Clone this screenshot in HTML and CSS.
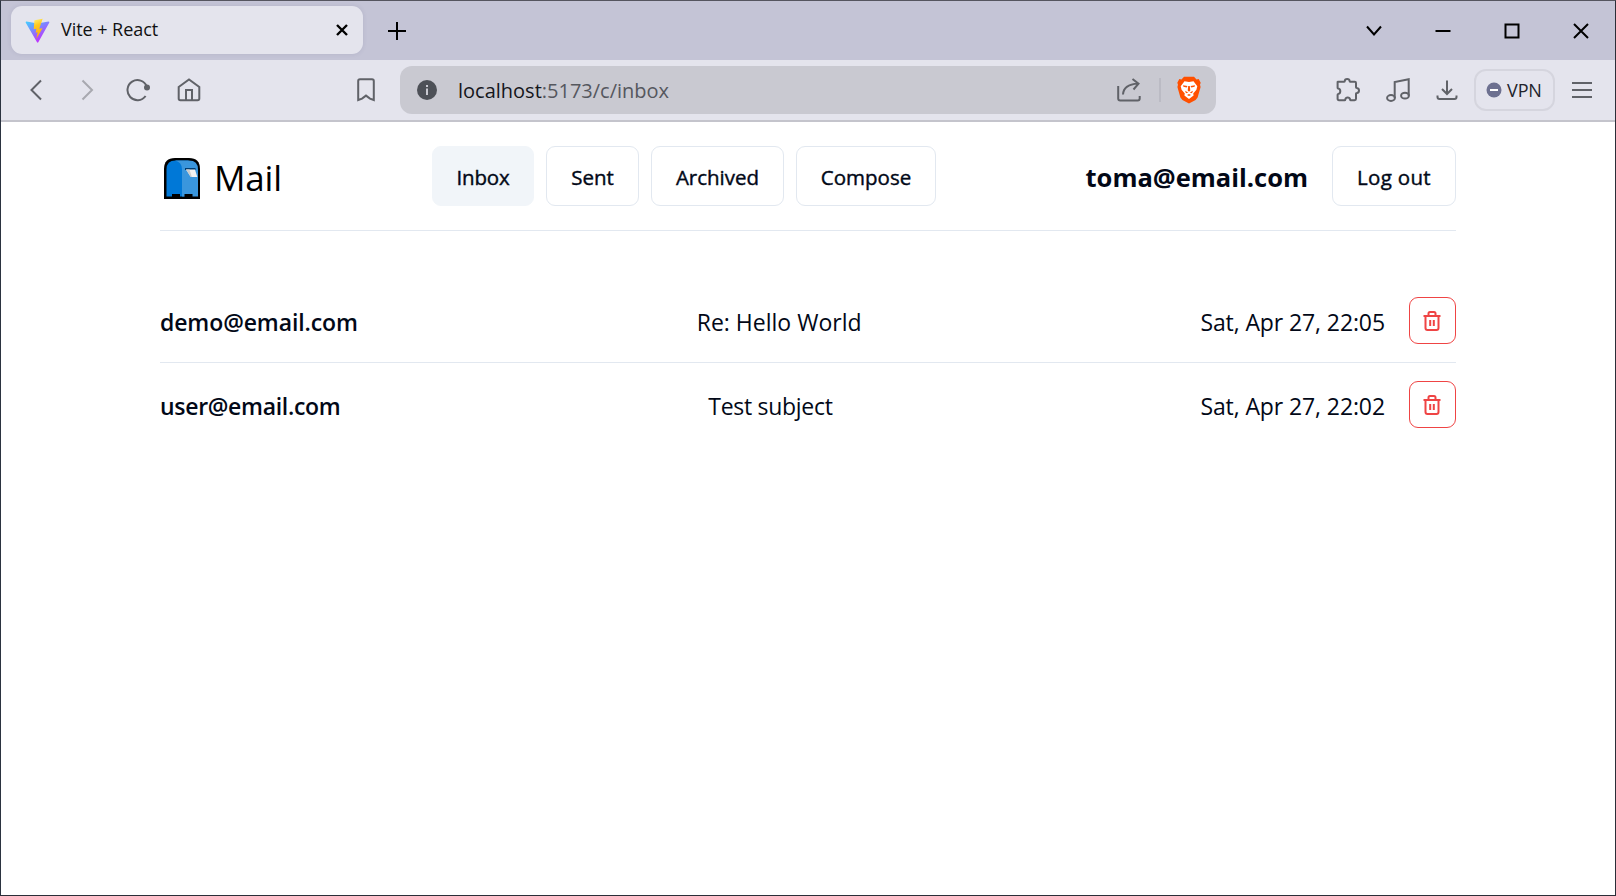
FILE: index.html
```html
<!DOCTYPE html>
<html lang="en">
<head>
<meta charset="utf-8">
<title>Vite + React</title>
<link rel="stylesheet" href="styles.css">
</head>
<body>
<div class="window">
  <div class="titlebar">
    <div class="tab">
      <svg class="tab-logo" width="25" height="25" viewBox="0 0 32 32">
        <defs>
          <linearGradient id="vg" x1="0" y1="0" x2=".6" y2=".9"><stop offset="0" stop-color="#41d1ff"/><stop offset="1" stop-color="#bd34fe"/></linearGradient>
          <linearGradient id="bg" x1=".4" y1="0" x2=".6" y2="1"><stop offset="0" stop-color="#ffea63"/><stop offset=".3" stop-color="#ffc820"/><stop offset="1" stop-color="#ffa800"/></linearGradient>
        </defs>
        <path fill="url(#vg)" d="M31 6 17 31q-.8 1.200-1.600 0L1 6q-.5-1.500 1-1.400l14 2.500L30 4.600q1.500 0 1 1.400z"/>
        <path fill="url(#bg)" d="M22.600 1 12 3l-.8 11.500 3.400-.7-.9 5.200 2.500-.7-1.800 8.600 8-13.800-4.200.7z"/>
      </svg>
      <span class="tab-title">Vite + React</span>
      <svg class="tab-close" width="14" height="14" viewBox="0 0 14 14"><path d="M2 2l10 10M12 2L2 12"/></svg>
    </div>
    <svg class="tab-new" width="20" height="20" viewBox="0 0 20 20"><path d="M10 1v18M1 10h18"/></svg>
    <div class="window-controls">
      <svg width="16" height="16" viewBox="0 0 16 16"><path d="M1 3.500l7 8 7-8"/></svg>
      <svg width="16" height="16" viewBox="0 0 16 16"><path d="M.5 8h15"/></svg>
      <svg width="16" height="16" viewBox="0 0 16 16"><path d="M1.500 1.500h13v13h-13z"/></svg>
      <svg width="16" height="16" viewBox="0 0 16 16"><path d="M1 1l14 14M15 1L1 15"/></svg>
    </div>
  </div>
  <div class="toolbar">
    <div class="nav-icons">
      <svg width="24" height="24" viewBox="0 0 24 24"><path d="M17 2.500L7.500 12l9.500 9.500"/></svg>
      <svg class="dim" width="24" height="24" viewBox="0 0 24 24"><path d="M7.500 2.500l9.500 9.500-9.500 9.500"/></svg>
      <svg width="24" height="24" viewBox="0 0 24 24"><path d="M20.800 8.500a10 10 0 1 0-1.200 9.500"/><circle class="dot" cx="21" cy="9.500" r="3"/></svg>
      <svg width="24" height="24" viewBox="0 0 24 24"><path d="M1.700 9L12 1.500 22.300 9v11.500q0 1.700-1.700 1.700H3.400q-1.700 0-1.700-1.700zM9 22v-10h6V22"/></svg>
    </div>
    <svg class="bookmark" width="18" height="24" viewBox="0 0 18 24"><path d="M1.200 3q0-1.800 1.800-1.800h12q1.800 0 1.800 1.800v19L13 20.600l-4-3-4 3L1.200 22z"/></svg>
    <div class="address">
      <svg class="info" width="20" height="20" viewBox="0 0 20 20"><circle cx="10" cy="10" r="10" fill="#4d5057"/><path d="M9 5h2v2H9zM9 8.500h2V15H9z" fill="#c9c9d1"/></svg>
      <span class="url"><span class="host">localhost</span>:5173/c/inbox</span>
      <svg class="share" width="24" height="24" viewBox="0 0 24 24"><path d="M1.200 8v12.500q0 2 2 2h17.500q2 0 2-2V18M6 16.500Q6.500 6.500 21 5.500M15.500 1l6 4.700-5 5.800"/></svg>
      <span class="address-sep"></span>
      <svg class="brave" width="24" height="28" viewBox="0 0 24 28">
        <path fill="#ff5000" d="M7 .8h10l2.500 2.600 2.200-.3 2 3.600-.7 2 .6 2.300-3 10.500-2 2.500L12 27.600 5.400 24l-2-2.500L.4 11 1 8.700l-.7-2 2-3.600 2.200.3z"/>
        <path fill="#fff" d="M7.500 5.200l4.500.9 4.500-.9 3.800 5-.9 3.500-3.200 3.800.4 2-4.600 3.500-4.600-3.500.4-2-3.200-3.800-.9-3.500z"/>
        <path fill="#ff5000" d="M6 9.300l4.500.8-.8 1.300-3.300-.6zM18 9.300l-4.500.8.800 1.300 3.300-.6zM11.200 10h1.600l.5 4.500L12 15.700l-1.300-1.200zM8 14.800l3.300 1.700-2.300.8zM16 14.800l-3.300 1.700 2.300.8zM10 19l2-1 2 1-2 1z"/>
      </svg>
    </div>
    <div class="tools">
      <svg class="puzzle" width="24" height="24" viewBox="0 0 24 24"><path d="M2 3.700h6.200q.6 0 .6-.7 0-2 2.400-2t2.400 2q0 .7.600.7h4.600q1.200 0 1.200 1.200v4.300q0 .7.800.7 2.200.3 2.200 2.600t-2.200 2.600q-.8 0-.8.700v5q0 1.400-1.400 1.400h-3.800q-.6 0-.7-.7-.4-2-2.400-2t-2.400 2q-.1.700-.7.700H3q-1.400 0-1.400-1.400v-4q0-.7.700-.9 2-.5 2-2.700t-2-2.600q-.7-.2-.7-.9V4z"/></svg>
      <svg class="music" width="24" height="24" viewBox="0 0 24 24"><path d="M8.700 20V4l14-2.800v16.500"/><ellipse cx="5" cy="20" rx="3.900" ry="2.900"/><ellipse cx="19" cy="17.700" rx="3.900" ry="2.900"/></svg>
      <svg class="download" width="22" height="22" viewBox="0 0 22 22"><path d="M11 1.500v13M6 10l5 5 5-5M1.500 16.500v1.500q0 2 2 2h15q2 0 2-2v-1.500"/></svg>
      <div class="vpn"><svg width="16" height="16" viewBox="0 0 16 16"><circle cx="8" cy="8" r="7.500" fill="#6d7090"/><path d="M4 7h8v2H4z" fill="#fff"/></svg><span>VPN</span></div>
      <svg class="menu" width="20" height="18" viewBox="0 0 20 18"><path d="M0 2h20M0 9h20M0 16h20"/></svg>
    </div>
  </div>
  <main class="page">
    <header class="header">
      <div class="brand">
        <svg width="36" height="41" viewBox="0 0 36 41">
          <path fill="#000" d="M0 41V11Q0 0 11 0h14q11 0 11 11v30z"/>
          <path fill="#0078d7" d="M2.500 38.500V11.500q0-9 9-9h13v36z"/>
          <path fill="#3a96dd" d="M11 2.500h14q9 0 9 9v27H18V11.500Q18 4 11 2.500z"/>
          <path fill="#000" d="M8 36h8v3H8zM20.500 36h8v3h-8z"/>
          <path fill="#003e73" d="M21 10h10.500v2H21z"/><path fill="#f2f2f2" d="M22 11.500h9l2.300 7.500h-6.500z"/><path fill="#ccc" d="M22 11.500h3.500l2.300 7.500h-1z"/>
        </svg>
        <span class="brand-name">Mail</span>
      </div>
      <nav class="nav">
        <a class="btn active">Inbox</a>
        <a class="btn sent">Sent</a>
        <a class="btn archived">Archived</a>
        <a class="btn compose">Compose</a>
      </nav>
      <div class="account"><span class="user">toma@email.com</span><a class="btn logout">Log out</a></div>
    </header>
    <section class="list">
      <article class="mail">
        <span class="from">demo@email.com</span><span class="subject">Re: Hello World</span><span class="date">Sat, Apr 27, 22:05</span>
        <a class="trash"><svg width="18" height="20" viewBox="0 0 18 20"><path d="M.5 5h17M5.500 5V2.600Q5.500 1 7 1h4q1.500 0 1.500 1.600V5M2.500 5v12q0 2 2 2h9q2 0 2-2V5M7.200 9v6M10.800 9v6"/></svg></a>
      </article>
      <article class="mail">
        <span class="from tight">user@email.com</span><span class="subject tight">Test subject</span><span class="date">Sat, Apr 27, 22:02</span>
        <a class="trash"><svg width="18" height="20" viewBox="0 0 18 20"><path d="M.5 5h17M5.500 5V2.600Q5.500 1 7 1h4q1.500 0 1.500 1.600V5M2.500 5v12q0 2 2 2h9q2 0 2-2V5M7.200 9v6M10.800 9v6"/></svg></a>
      </article>
    </section>
  </main>
</div>
</body>
</html>
```
FILE: styles.css
```css
* { box-sizing: border-box; }
body { margin: 0; font-family: "Open Sans", "Noto Sans", sans-serif; color: #020817; background: #fff; }
svg { display: block; flex: none; fill: none; stroke-width: 2; }
span, a { white-space: nowrap; }
.window { width: 1616px; height: 896px; border: 1px solid #55555f; border-right-color: #2b2e38; border-bottom-color: #2b2e38; border-left-color: #2b3340; overflow: hidden; }
.titlebar { display: flex; align-items: center; height: 59px; padding-left: 10px; background: #c4c4d6; }
.tab { display: flex; align-items: center; width: 352px; height: 48px; margin-top: -1px; padding: 0 14px 0 14px; border-radius: 11px; background: #e4e4ed; box-shadow: 0 0 4px rgba(90, 90, 130, .15); }
.tab-title { flex: 1; margin-left: 11px; padding-bottom: 2px; font-size: 18px; letter-spacing: -.05px; color: #111; }
.tab-close { stroke: #000; stroke-width: 2.400; }
.tab-new { margin-left: 24px; stroke: #000; }
.window-controls { display: flex; gap: 53px; margin-left: auto; margin-right: 26.500px; margin-top: 1.500px; stroke: #000; }
.toolbar { display: flex; align-items: center; height: 62px; padding-left: 22px; border-bottom: 2px solid #c4c4cc; background: #e4e4ed; stroke: #606268; }
.nav-icons { display: flex; gap: 27px; padding-left: .5px; }
.dim { opacity: .45; }
.dot { fill: #606268; stroke: none; }
.bookmark { margin-left: 156px; }
.address { display: flex; align-items: center; width: 816px; height: 48px; margin-left: 25.500px; padding-left: 17px; border-radius: 12px; background: #c9c9d1; }
.info { stroke: none; }
.url { flex: 1; margin-left: 21px; font-size: 20px; color: #55575e; }
.host { color: #15161b; }
.address-sep { width: 2px; height: 24px; margin: 0 16px 0 18px; background: #bbbbc4; }
.brave { margin-right: 15px; stroke: none; }
.tools { display: flex; align-items: center; margin-left: 120px; }
.music { margin-left: 26px; }
.download { margin-left: 26px; }
.vpn { display: flex; align-items: center; width: 81px; height: 42px; margin-left: 16px; padding-left: 10px; gap: 5px; border: 2px solid #d5d5de; border-radius: 12px; font-size: 18px; letter-spacing: -.1px; color: #22232b; }
.vpn svg { stroke: none; }
.menu { margin-left: 17px; stroke-width: 1.800; }
.page { padding: 0 159px; }
.header { display: flex; align-items: center; height: 109px; padding: 24px 0; border-bottom: 1px solid #e2e8f0; }
.brand { display: flex; align-items: center; width: 272px; padding-left: 4px; gap: 14px; color: #000; }
.brand svg { margin-top: 4px; }
.brand-name { padding-top: 3px; font-size: 35px; letter-spacing: -.2px; }
.nav { display: flex; gap: 12px; }
.btn { display: flex; align-items: center; justify-content: center; width: 102px; height: 60px; padding-top: 1px; border: 1px solid #e2e8f0; border-radius: 9px; font-size: 20.500px; -webkit-text-stroke: .4px currentColor; }
.active { letter-spacing: -.2px; background: #f1f5f9; border-color: #f1f5f9; }
.sent { width: 93px; }
.archived { width: 133px; }
.compose { width: 140px; }
.logout { width: 124px; letter-spacing: .3px; }
.account { display: flex; align-items: center; gap: 24px; margin-left: auto; }
.user { padding-top: 2px; font-size: 25.500px; font-weight: 700; }
.list { margin-top: 48px; }
.mail { display: flex; align-items: center; height: 84px; font-size: 23px; border-bottom: 1px solid #e2e8f0; }
.mail:last-child { height: 83px; border-bottom: 0; }
.mail span { padding-top: 3px; }
.from { font-weight: 600; letter-spacing: -.1px; }
.subject { margin: 0 auto; }
.date { letter-spacing: -.1px; }
.tight { letter-spacing: -.3px; }
.trash { display: flex; align-items: center; justify-content: center; width: 47px; height: 47px; margin-left: 24px; border: 1px solid #ef4444; border-radius: 9px; stroke: #ef4444; }
```
